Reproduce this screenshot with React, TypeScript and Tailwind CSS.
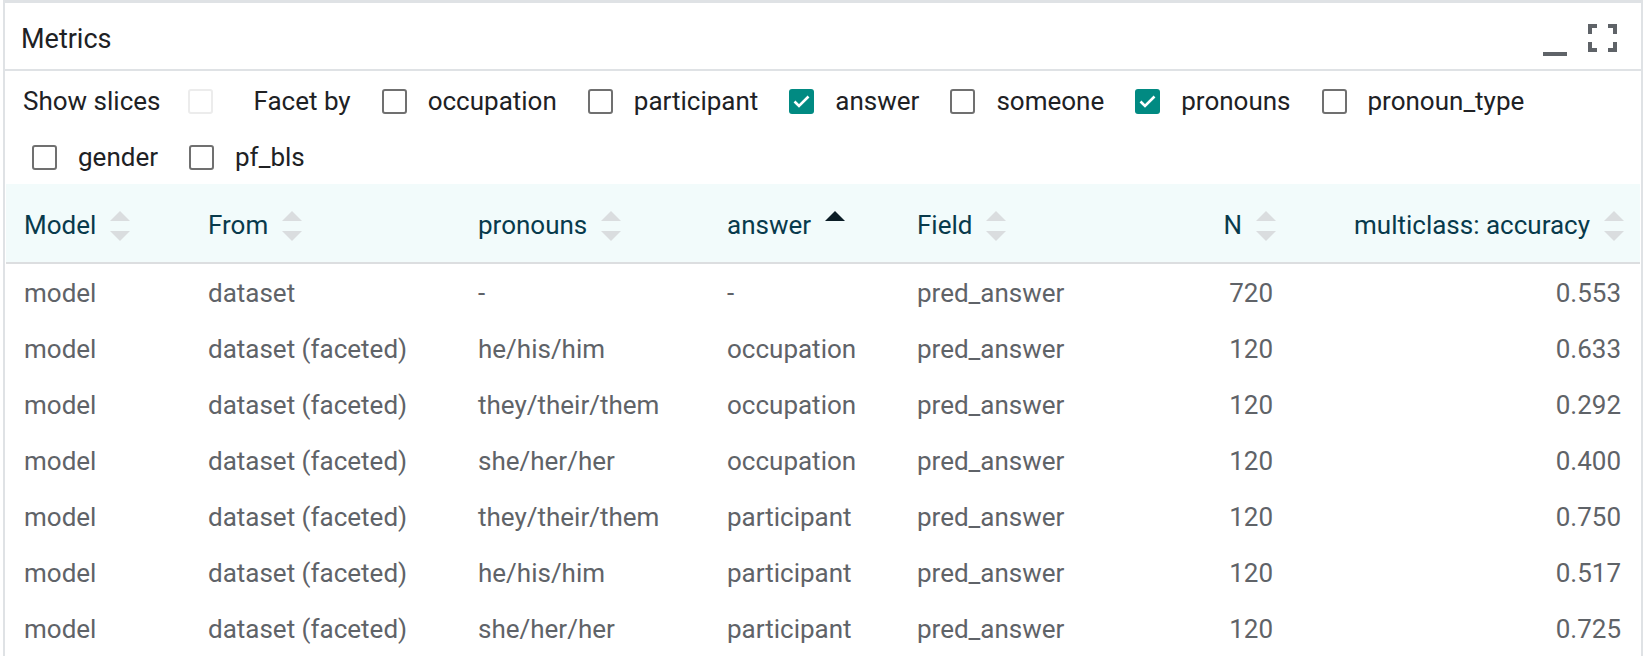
import React from "react";

type Row = [string, string, string, string, string, string, string];

const rows: Row[] = [
  ["model", "dataset", "-", "-", "pred_answer", "720", "0.553"],
  ["model", "dataset (faceted)", "he/his/him", "occupation", "pred_answer", "120", "0.633"],
  ["model", "dataset (faceted)", "they/their/them", "occupation", "pred_answer", "120", "0.292"],
  ["model", "dataset (faceted)", "she/her/her", "occupation", "pred_answer", "120", "0.400"],
  ["model", "dataset (faceted)", "they/their/them", "participant", "pred_answer", "120", "0.750"],
  ["model", "dataset (faceted)", "he/his/him", "participant", "pred_answer", "120", "0.517"],
  ["model", "dataset (faceted)", "she/her/her", "participant", "pred_answer", "120", "0.725"],
];

const grid = "grid grid-cols-[184px_270px_249px_190px_250px_133px_348px]";

function SortIcon({ active }: { active?: boolean }) {
  return (
    <svg width="20" height="30" viewBox="0 0 20 30" className="ml-[14px] shrink-0">
      <polygon points="0,10 10,0 20,10" fill={active ? "#0b1d26" : "#dadddf"} />
      {!active && <polygon points="0,20 20,20 10,30" fill="#dadddf" />}
    </svg>
  );
}

function Checkbox({ checked, disabled }: { checked?: boolean; disabled?: boolean }) {
  if (checked) {
    return (
      <span className="ml-[9px] mr-[21px] grid size-[25px] shrink-0 place-items-center rounded-[3px] bg-[#018a82]">
        <svg width="17" height="13" viewBox="0 0 17 13">
          <path d="M1.5 6.5 L6 11 L15.5 1.5" fill="none" stroke="white" strokeWidth="2.6" />
        </svg>
      </span>
    );
  }
  return (
    <span
      className={
        disabled
          ? "ml-[9px] mr-[21px] size-[25px] shrink-0 rounded-[3px] border-2 border-[#ececec]"
          : "ml-[9px] mr-[21px] size-[25px] shrink-0 rounded-[3px] border-2 border-[#707070]"
      }
    />
  );
}

function Facet({ label, checked }: { label: string; checked?: boolean }) {
  return (
    <>
      <Checkbox checked={checked} />
      <span className="mr-[22px]">{label}</span>
    </>
  );
}

function HeaderCell({ label, right, active }: { label: string; right?: boolean; active?: boolean }) {
  return (
    <div className={right ? "flex items-center justify-end pr-[6px] pt-[5px]" : "flex items-center pl-[18px] pt-[5px]"}>
      <span>{label}</span>
      <SortIcon active={active} />
    </div>
  );
}

export default function App() {
  return (
    <div className="h-[660px] overflow-hidden bg-white px-[3px] font-['Roboto',sans-serif]">
      <div className="border-x-2 border-t-[3px] border-[#dfe2e5]">
        <div className="flex h-[68px] items-center justify-between border-b-2 border-[#dfe2e5] pl-[16px] pr-[24px] pt-[3px]">
          <span className="pt-[4px] text-[27px] text-[#202124]">Metrics</span>
          <div className="flex items-center gap-[21px]">
            <svg width="24" height="40" viewBox="0 0 24 40">
              <rect x="0" y="34" width="24" height="4" fill="#5f6368" />
            </svg>
            <svg width="29" height="28" viewBox="0 0 29 28" fill="#5f6368">
              <rect x="0" y="0" width="9" height="4" />
              <rect x="0" y="0" width="4" height="10" />
              <rect x="20" y="0" width="9" height="4" />
              <rect x="25" y="0" width="4" height="10" />
              <rect x="0" y="24" width="9" height="4" />
              <rect x="0" y="18" width="4" height="10" />
              <rect x="20" y="24" width="9" height="4" />
              <rect x="25" y="18" width="4" height="10" />
            </svg>
          </div>
        </div>

        <div className="text-[26px] text-[#202124]">
          <div className="flex h-[56px] items-center pl-[18px] pt-[4px]">
            <span className="mr-[19px]">Show slices</span>
            <Checkbox disabled />
            <span className="ml-[19px] mr-[22px]">Facet by</span>
            <Facet label="occupation" />
            <Facet label="participant" />
            <Facet label="answer" checked />
            <Facet label="someone" />
            <Facet label="pronouns" checked />
            <Facet label="pronoun_type" />
          </div>
          <div className="flex h-[57px] items-center pl-[18px] pt-[3px]">
            <Facet label="gender" />
            <Facet label="pf_bls" />
          </div>
        </div>

        <div className="px-px text-[26px]">
          <div className={`${grid} h-[80px] border-b-2 border-[#dcdee0] bg-[#f2fbfb] text-[#083a4c]`}>
            <HeaderCell label="Model" />
            <HeaderCell label="From" />
            <HeaderCell label="pronouns" />
            <HeaderCell label="answer" active />
            <HeaderCell label="Field" />
            <HeaderCell label="N" right />
            <HeaderCell label="multiclass: accuracy" right />
          </div>
          {rows.map((r, i) => (
            <div key={i} className={`${grid} h-[56px] items-center pt-[2px] text-[#5f6368]`}>
              <span className="pl-[18px]">{r[0]}</span>
              <span className="pl-[18px]">{r[1]}</span>
              <span className="pl-[18px]">{r[2]}</span>
              <span className="pl-[18px]">{r[3]}</span>
              <span className="pl-[18px]">{r[4]}</span>
              <span className="pr-[9px] text-right">{r[5]}</span>
              <span className="pr-[9px] text-right">{r[6]}</span>
            </div>
          ))}
        </div>
      </div>
    </div>
  );
}
